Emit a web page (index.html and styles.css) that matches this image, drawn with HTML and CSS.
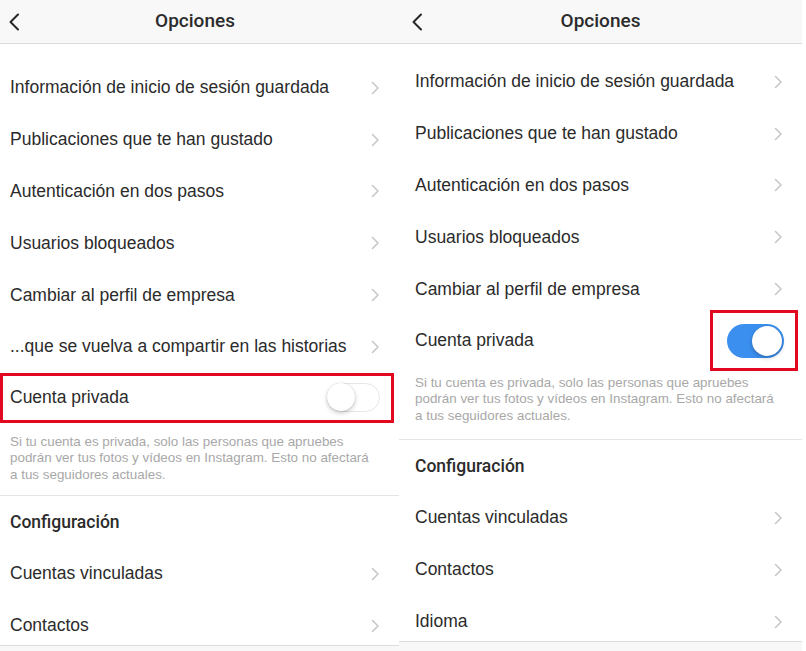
FILE: index.html
```html
<!DOCTYPE html>
<html lang="es">
<head>
    <meta charset="UTF-8">
    <meta name="viewport" content="width=device-width, initial-scale=1.0">
    <title>Opciones</title>
    <link rel="stylesheet" href="styles.css">
</head>
<body>
    <div class="screens">
        <!-- privada desactivada -->
        <div class="panel panel-left">
            <div class="topbar">
                <svg class="back" width="12" height="18" viewBox="0 0 12 18"><path d="M10 1.5 L2.5 9 L10 16.5" fill="none" stroke="#262626" stroke-width="2" stroke-linecap="round" stroke-linejoin="round"/></svg>
                <div class="title">Opciones</div>
            </div>
            <div class="list">
                <div class="row"><span>Información de inicio de sesión guardada</span><svg class="chev" width="9" height="14" viewBox="0 0 9 14"><path d="M1.5 1.5 L7 7 L1.5 12.5" fill="none" stroke="#c7c7cc" stroke-width="1.6" stroke-linecap="round" stroke-linejoin="round"/></svg></div>
                <div class="row"><span>Publicaciones que te han gustado</span><svg class="chev" width="9" height="14" viewBox="0 0 9 14"><path d="M1.5 1.5 L7 7 L1.5 12.5" fill="none" stroke="#c7c7cc" stroke-width="1.6" stroke-linecap="round" stroke-linejoin="round"/></svg></div>
                <div class="row"><span>Autenticación en dos pasos</span><svg class="chev" width="9" height="14" viewBox="0 0 9 14"><path d="M1.5 1.5 L7 7 L1.5 12.5" fill="none" stroke="#c7c7cc" stroke-width="1.6" stroke-linecap="round" stroke-linejoin="round"/></svg></div>
                <div class="row"><span>Usuarios bloqueados</span><svg class="chev" width="9" height="14" viewBox="0 0 9 14"><path d="M1.5 1.5 L7 7 L1.5 12.5" fill="none" stroke="#c7c7cc" stroke-width="1.6" stroke-linecap="round" stroke-linejoin="round"/></svg></div>
                <div class="row"><span>Cambiar al perfil de empresa</span><svg class="chev" width="9" height="14" viewBox="0 0 9 14"><path d="M1.5 1.5 L7 7 L1.5 12.5" fill="none" stroke="#c7c7cc" stroke-width="1.6" stroke-linecap="round" stroke-linejoin="round"/></svg></div>
                <div class="row"><span>...que se vuelva a compartir en las historias</span><svg class="chev" width="9" height="14" viewBox="0 0 9 14"><path d="M1.5 1.5 L7 7 L1.5 12.5" fill="none" stroke="#c7c7cc" stroke-width="1.6" stroke-linecap="round" stroke-linejoin="round"/></svg></div>
                <div class="row row-marked"><span>Cuenta privada</span><span class="switch"></span></div>
                <p class="note">Si tu cuenta es privada, solo las personas que apruebes podrán ver tus fotos y vídeos en Instagram. Esto no afectará a tus seguidores actuales.</p>
                <div class="row section">Configuración</div>
                <div class="row"><span>Cuentas vinculadas</span><svg class="chev" width="9" height="14" viewBox="0 0 9 14"><path d="M1.5 1.5 L7 7 L1.5 12.5" fill="none" stroke="#c7c7cc" stroke-width="1.6" stroke-linecap="round" stroke-linejoin="round"/></svg></div>
                <div class="row"><span>Contactos</span><svg class="chev" width="9" height="14" viewBox="0 0 9 14"><path d="M1.5 1.5 L7 7 L1.5 12.5" fill="none" stroke="#c7c7cc" stroke-width="1.6" stroke-linecap="round" stroke-linejoin="round"/></svg></div>
            </div>
            <div class="tabbar"></div>
        </div>

        <!-- privada activada -->
        <div class="panel panel-right">
            <div class="topbar">
                <svg class="back" width="12" height="18" viewBox="0 0 12 18"><path d="M10 1.5 L2.5 9 L10 16.5" fill="none" stroke="#262626" stroke-width="2" stroke-linecap="round" stroke-linejoin="round"/></svg>
                <div class="title">Opciones</div>
            </div>
            <div class="list">
                <div class="row"><span>Información de inicio de sesión guardada</span><svg class="chev" width="9" height="14" viewBox="0 0 9 14"><path d="M1.5 1.5 L7 7 L1.5 12.5" fill="none" stroke="#c7c7cc" stroke-width="1.6" stroke-linecap="round" stroke-linejoin="round"/></svg></div>
                <div class="row"><span>Publicaciones que te han gustado</span><svg class="chev" width="9" height="14" viewBox="0 0 9 14"><path d="M1.5 1.5 L7 7 L1.5 12.5" fill="none" stroke="#c7c7cc" stroke-width="1.6" stroke-linecap="round" stroke-linejoin="round"/></svg></div>
                <div class="row"><span>Autenticación en dos pasos</span><svg class="chev" width="9" height="14" viewBox="0 0 9 14"><path d="M1.5 1.5 L7 7 L1.5 12.5" fill="none" stroke="#c7c7cc" stroke-width="1.6" stroke-linecap="round" stroke-linejoin="round"/></svg></div>
                <div class="row"><span>Usuarios bloqueados</span><svg class="chev" width="9" height="14" viewBox="0 0 9 14"><path d="M1.5 1.5 L7 7 L1.5 12.5" fill="none" stroke="#c7c7cc" stroke-width="1.6" stroke-linecap="round" stroke-linejoin="round"/></svg></div>
                <div class="row"><span>Cambiar al perfil de empresa</span><svg class="chev" width="9" height="14" viewBox="0 0 9 14"><path d="M1.5 1.5 L7 7 L1.5 12.5" fill="none" stroke="#c7c7cc" stroke-width="1.6" stroke-linecap="round" stroke-linejoin="round"/></svg></div>
                <div class="row"><span>Cuenta privada</span><span class="switch-box"><span class="switch on"></span></span></div>
                <p class="note">Si tu cuenta es privada, solo las personas que apruebes podrán ver tus fotos y vídeos en Instagram. Esto no afectará a tus seguidores actuales.</p>
                <div class="row section">Configuración</div>
                <div class="row"><span>Cuentas vinculadas</span><svg class="chev" width="9" height="14" viewBox="0 0 9 14"><path d="M1.5 1.5 L7 7 L1.5 12.5" fill="none" stroke="#c7c7cc" stroke-width="1.6" stroke-linecap="round" stroke-linejoin="round"/></svg></div>
                <div class="row"><span>Contactos</span><svg class="chev" width="9" height="14" viewBox="0 0 9 14"><path d="M1.5 1.5 L7 7 L1.5 12.5" fill="none" stroke="#c7c7cc" stroke-width="1.6" stroke-linecap="round" stroke-linejoin="round"/></svg></div>
                <div class="row"><span>Idioma</span><svg class="chev" width="9" height="14" viewBox="0 0 9 14"><path d="M1.5 1.5 L7 7 L1.5 12.5" fill="none" stroke="#c7c7cc" stroke-width="1.6" stroke-linecap="round" stroke-linejoin="round"/></svg></div>
            </div>
            <div class="tabbar"></div>
        </div>
    </div>
</body>
</html>
```

FILE: styles.css
```css
* {
    margin: 0;
    padding: 0;
    box-sizing: border-box;
}

body {
    background: #fff;
    font-family: 'Liberation Sans', Arial, sans-serif;
    color: #2b2b2b;
}

.screens {
    display: flex;
    width: 806px;
    height: 651px;
    overflow: hidden;
}

.panel {
    display: flex;
    flex-direction: column;
    height: 651px;
    background: #fff;
}

.panel-left {
    width: 399px;
}

.panel-right {
    width: 403px;
}

.topbar {
    height: 44px;
    flex-shrink: 0;
    background: #f8f8f8;
    border-bottom: 1px solid #dcdcdc;
    display: flex;
    align-items: center;
    padding-left: 8px;
}

.panel-right .topbar {
    padding-left: 12px;
}

.back {
    flex-shrink: 0;
}

.title {
    flex: 1;
    text-align: center;
    font-family: Roboto, 'Liberation Sans', sans-serif;
    font-size: 19px;
    font-weight: 500;
    padding-right: 29px;
    margin-top: -3px;
}

.panel-right .title {
    padding-right: 24px;
}

.list {
    flex: 1;
    overflow: hidden;
}

.panel-left .list {
    padding-top: 18px;
}

.panel-right .list {
    padding-top: 12px;
}

.row {
    height: 51.8px;
    display: flex;
    align-items: center;
    justify-content: space-between;
    padding: 0 19px 0 10px;
    font-size: 17.5px;
}

.panel-right .row {
    padding-left: 16px;
}

.chev {
    flex-shrink: 0;
}

.section {
    font-family: Roboto, 'Liberation Sans', sans-serif;
    font-weight: 500;
}

.row-marked {
    border: 3px solid #e1081f;
    margin-right: 5px;
    height: 50px;
    padding: 0 11px 0 7px;
}

.switch {
    display: block;
    position: relative;
    width: 53px;
    height: 29px;
    border-radius: 15px;
    background: #fff;
    border: 1.5px solid #e6e6e6;
}

.switch::after {
    content: '';
    position: absolute;
    top: -1px;
    left: -1px;
    width: 28px;
    height: 28px;
    border-radius: 50%;
    background: #fff;
    box-shadow: 0 2px 4px rgba(0, 0, 0, 0.22), 0 0 1px rgba(0, 0, 0, 0.2);
}

.switch.on {
    width: 57px;
    height: 34px;
    border-radius: 17px;
    background: #3a8fef;
    border: none;
}

.switch.on::after {
    top: 2px;
    left: auto;
    right: 2px;
    width: 30px;
    height: 30px;
}

.switch-box {
    display: block;
    border: 3px solid #e1081f;
    padding: 11px 11px 10px 14px;
    margin-right: -15px;
}

.note {
    font-size: 13.4px;
    line-height: 16.5px;
    color: #a8a8a8;
    padding: 11px 20px 12px 10px;
    border-bottom: 1px solid #e4e4e4;
}

.panel-right .note {
    padding: 8px 20px 15px 16px;
}

.tabbar {
    flex-shrink: 0;
    background: #f8f8f8;
    border-top: 1px solid #dcdcdc;
}

.panel-left .tabbar {
    height: 6px;
}

.panel-right .tabbar {
    height: 10px;
}
```
